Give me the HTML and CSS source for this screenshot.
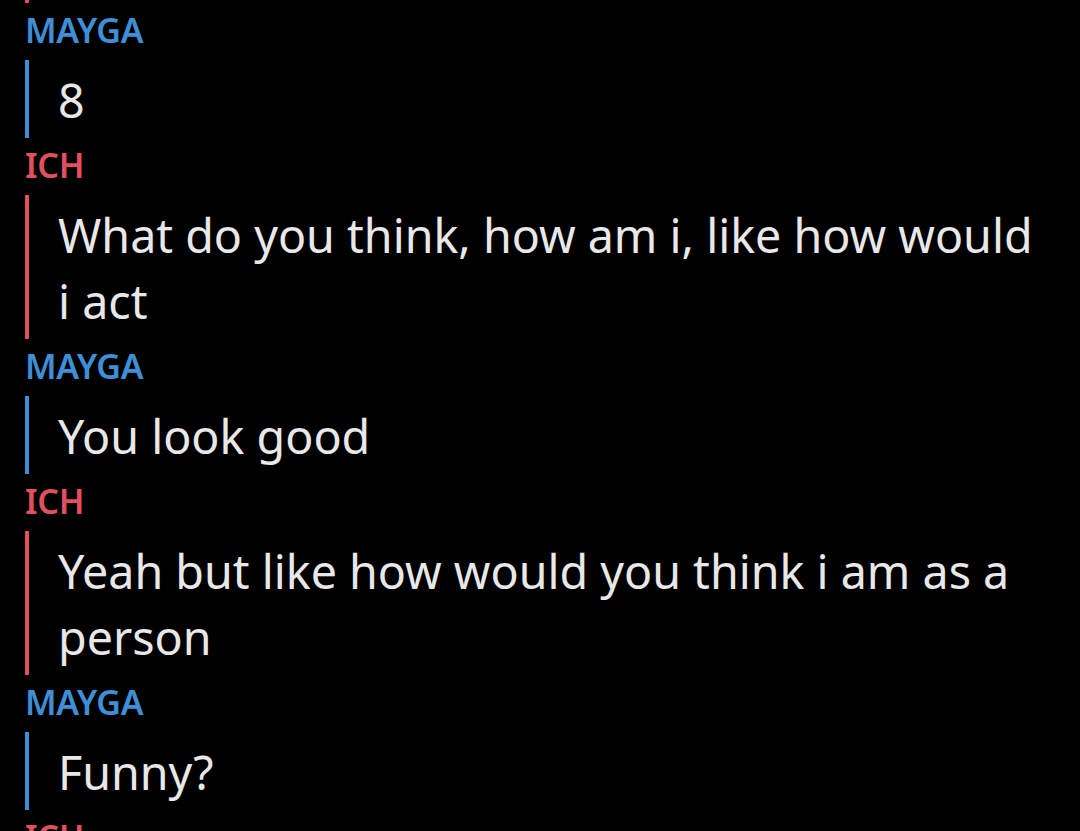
FILE: index.html
```html
<!DOCTYPE html>
<html>
<head>
<meta charset="utf-8">
<link rel="stylesheet" href="styles.css">
</head>
<body>
<div class="chat">
  <div class="stub red"></div>
  <div class="entry">
    <div class="name blue">MAYGA</div>
    <div class="msg blue"><p>8</p></div>
  </div>
  <div class="entry">
    <div class="name red">ICH</div>
    <div class="msg red"><p>What do you think, how am i, like how would i act</p></div>
  </div>
  <div class="entry">
    <div class="name blue">MAYGA</div>
    <div class="msg blue"><p>You look good</p></div>
  </div>
  <div class="entry">
    <div class="name red">ICH</div>
    <div class="msg red"><p>Yeah but like how would you think i am as a person</p></div>
  </div>
  <div class="entry">
    <div class="name blue">MAYGA</div>
    <div class="msg blue"><p>Funny?</p></div>
  </div>
  <div class="entry">
    <div class="name red">ICH</div>
  </div>
</div>
</body>
</html>
```
FILE: styles.css
```css
html, body {
  margin: 0;
  padding: 0;
  background: #000;
  height: 100%;
  overflow: hidden;
}
.chat {
  display: flex;
  flex-direction: column;
  padding-left: 25px;
  padding-right: 30px;
  font-family: "Noto Sans", "Lato", sans-serif;
}
.stub {
  width: 4px;
  height: 3px;
  background: #e0505f;
}
.name {
  font-size: 34px;
  line-height: 40px;
  font-weight: 600;
  padding: 7px 0 10px;
  letter-spacing: -0.3px;
}
.name.blue { color: #3d8fd8; }
.name.red { color: #e0505f; }
.msg {
  border-left: 4px solid;
  padding: 7px 0 5px 29px;
}
.msg.blue { border-color: #3d8fd8; }
.msg.red { border-color: #e0505f; }
.msg p {
  margin: 0;
  color: #e8e8e8;
  font-size: 46.6px;
  line-height: 66px;
}
```
